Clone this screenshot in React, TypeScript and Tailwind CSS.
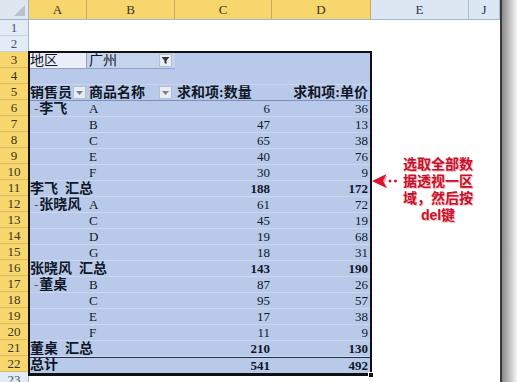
import React from "react";

type Row = {
  a?: string;
  minus?: boolean;
  b?: string;
  c?: string;
  d?: string;
  total?: boolean;
  grand?: boolean;
};

const rows: Row[] = [
  { minus: true, a: "李飞", b: "A", c: "6", d: "36" },
  { b: "B", c: "47", d: "13" },
  { b: "C", c: "65", d: "38" },
  { b: "E", c: "40", d: "76" },
  { b: "F", c: "30", d: "9" },
  { a: "李飞  汇总", c: "188", d: "172", total: true },
  { minus: true, a: "张晓风", b: "A", c: "61", d: "72" },
  { b: "C", c: "45", d: "19" },
  { b: "D", c: "19", d: "68" },
  { b: "G", c: "18", d: "31" },
  { a: "张晓风  汇总", c: "143", d: "190", total: true },
  { minus: true, a: "董桌", b: "B", c: "87", d: "26" },
  { b: "C", c: "95", d: "57" },
  { b: "E", c: "17", d: "38" },
  { b: "F", c: "11", d: "9" },
  { a: "董桌  汇总", c: "210", d: "130", total: true },
  { a: "总计", c: "541", d: "492", total: true, grand: true },
];

const columns = [
  { name: "A", w: "w-[58px]", on: true },
  { name: "B", w: "w-[88px]", on: true },
  { name: "C", w: "w-[97px]", on: true },
  { name: "D", w: "w-[99px]", on: true },
  { name: "E", w: "w-[98px]", on: false },
  { name: "J", w: "w-[31px]", on: false },
];

function DropButton({ funnel }: { funnel?: boolean }) {
  return (
    <div className="w-[13px] h-[13px] shrink-0 bg-[#e9edf3] border border-[#b4bfcf] flex items-center justify-center">
      {funnel ? (
        <svg width="9" height="9" viewBox="0 0 9 9">
          <path d="M0.5 1h8L5.5 4.5V8L3.5 7V4.5z" fill="#333" />
        </svg>
      ) : (
        <svg width="7" height="4" viewBox="0 0 7 4">
          <path d="M0 0h7L3.5 4z" fill="#7a7f88" />
        </svg>
      )}
    </div>
  );
}

export default function App() {
  const font = { fontFamily: '"Liberation Serif", "Noto Sans CJK SC", serif' };
  const rowNums = Array.from({ length: 23 }, (_, i) => i + 1);

  return (
    <div className="w-[523px] h-[382px] bg-white overflow-hidden flex text-[13px] text-[#101828]" style={font}>
      <div className="w-[500px] flex flex-col shrink-0">
        {/* column headers */}
        <div className="flex h-[20px] shrink-0 border-b border-[#9eb6ce]">
          <div className="w-[29px] bg-[#dee6f0] border-r border-[#9eb6ce] relative">
            <svg className="absolute right-[3px] bottom-[3px]" width="11" height="11" viewBox="0 0 11 11">
              <path d="M11 0V11H0z" fill="#b6c2d1" />
            </svg>
          </div>
          {columns.map((c) => (
            <div
              key={c.name}
              className={`${c.w} flex items-center justify-center border-r ${
                c.on ? "bg-[#f6d66d] border-[#c9ab55] text-[#3b3520]" : "bg-[#dde7f3] border-[#aebdd0] text-[#27354d]"
              }`}
            >
              {c.name}
            </div>
          ))}
        </div>

        <div className="flex flex-1">
          {/* row numbers */}
          <div className="w-[29px] flex flex-col border-r border-[#9eb6ce]">
            {rowNums.map((n) => (
              <div
                key={n}
                className={`h-[16px] shrink-0 flex items-center justify-center border-b leading-none ${
                  n >= 3 && n <= 22
                    ? "bg-[#f6d66d] border-[#d9bd66] text-[#3b3520]"
                    : "bg-[#e3ebf6] border-[#c5d3e3] text-[#46556c]"
                }`}
              >
                {n}
              </div>
            ))}
          </div>

          {/* sheet */}
          <div className="flex-1 flex flex-col relative">
            <div className="h-[32px] shrink-0" />
            <div className="flex">
              <div className="w-[344px] -ml-[1px] -mt-[1px] border-2 border-b-[3px] border-[#111] bg-[#b9c9e9] relative">
                {/* row 3: page filter */}
                <div className="flex h-[16px] text-[14px]">
                  <div className="w-[57px] bg-[#e9eef8] border-b border-r border-[#8ea3c8] flex items-center">
                    地区
                  </div>
                  <div className="w-[88px] bg-[#c6d3ec] border-b border-[#8ea3c8] flex items-center justify-between pl-[2px] pr-[3px]">
                    <span>广州</span>
                    <DropButton funnel />
                  </div>
                </div>
                {/* row 4 */}
                <div className="h-[16px] border-b border-[#c9d5ec]" />
                {/* row 5: headers */}
                <div className="flex h-[16px] border-b border-[#7890bb] font-bold text-[14px] leading-none">
                  <div className="w-[57px] flex items-center justify-between pr-[1px] whitespace-nowrap overflow-hidden">
                    <span className="overflow-hidden">销售员</span>
                    <DropButton />
                  </div>
                  <div className="w-[88px] flex items-center justify-between pl-[2px] pr-[3px]">
                    <span>商品名称</span>
                    <DropButton />
                  </div>
                  <div className="w-[97px] flex items-center pl-[2px] whitespace-nowrap">求和项:数量</div>
                  <div className="w-[98px] flex items-center justify-end pr-[2px] whitespace-nowrap">求和项:单价</div>
                </div>
                {rows.map((r, i) => (
                  <div
                    key={i}
                    className={`flex h-[16px] border-b ${r.grand ? "border-t border-t-[#24314d] border-b-transparent" : "border-[#cbd7ee]"} ${
                      r.total ? "font-bold" : ""
                    }`}
                  >
                    <div className="w-[57px] flex items-center whitespace-pre leading-none">
                      {r.minus && <span className="text-[#555] font-normal ml-[4px] mr-[1px]">-</span>}
                      {r.a && <span className="font-bold text-[14px]">{r.a}</span>}
                    </div>
                    <div className="w-[88px] flex items-center pl-[2px] leading-none">{r.b}</div>
                    <div className="w-[97px] flex items-center justify-end pr-[2px] leading-none">{r.c}</div>
                    <div className="w-[98px] flex items-center justify-end pr-[2px] leading-none">{r.d}</div>
                  </div>
                ))}
                <div className="absolute -right-[4px] -bottom-[5px] w-[6px] h-[6px] bg-[#111] border border-white" />
              </div>
            </div>

            {/* annotation */}
            <svg className="absolute left-[342px] top-[151px]" width="36" height="20" viewBox="0 0 36 20">
              <path d="M1.5 10L16 3.5L12.5 10L16 16.5z" fill="#e8a0a8" transform="translate(1 1)" />
              <path d="M1 10L15.5 3L12 10L15.5 17z" fill="#d8152b" />
              <circle cx="19" cy="10" r="1.5" fill="#d8152b" />
              <circle cx="24.5" cy="10" r="1.5" fill="#d8152b" />
            </svg>
            <div
              className="absolute left-[371px] top-[135px] w-[76px] text-center font-bold text-[14px] leading-[17px] text-[#c8102e] whitespace-nowrap [text-shadow:1px_1px_1px_#f0b0b0]"
              style={{ fontFamily: '"Noto Sans CJK SC", sans-serif' }}
            >
              <div>选取全部数</div>
              <div>据透视一区</div>
              <div>域，然后按</div>
              <div>
                <span style={{ fontFamily: '"Liberation Sans", "Noto Sans CJK SC", sans-serif' }}>del</span>键
              </div>
            </div>
          </div>
        </div>
      </div>
      <div className="w-[2px] bg-[#3a3a3a] shrink-0" />
      <div className="w-[16px] shrink-0 bg-gradient-to-r from-[#8a8a8a] to-white" />
    </div>
  );
}
